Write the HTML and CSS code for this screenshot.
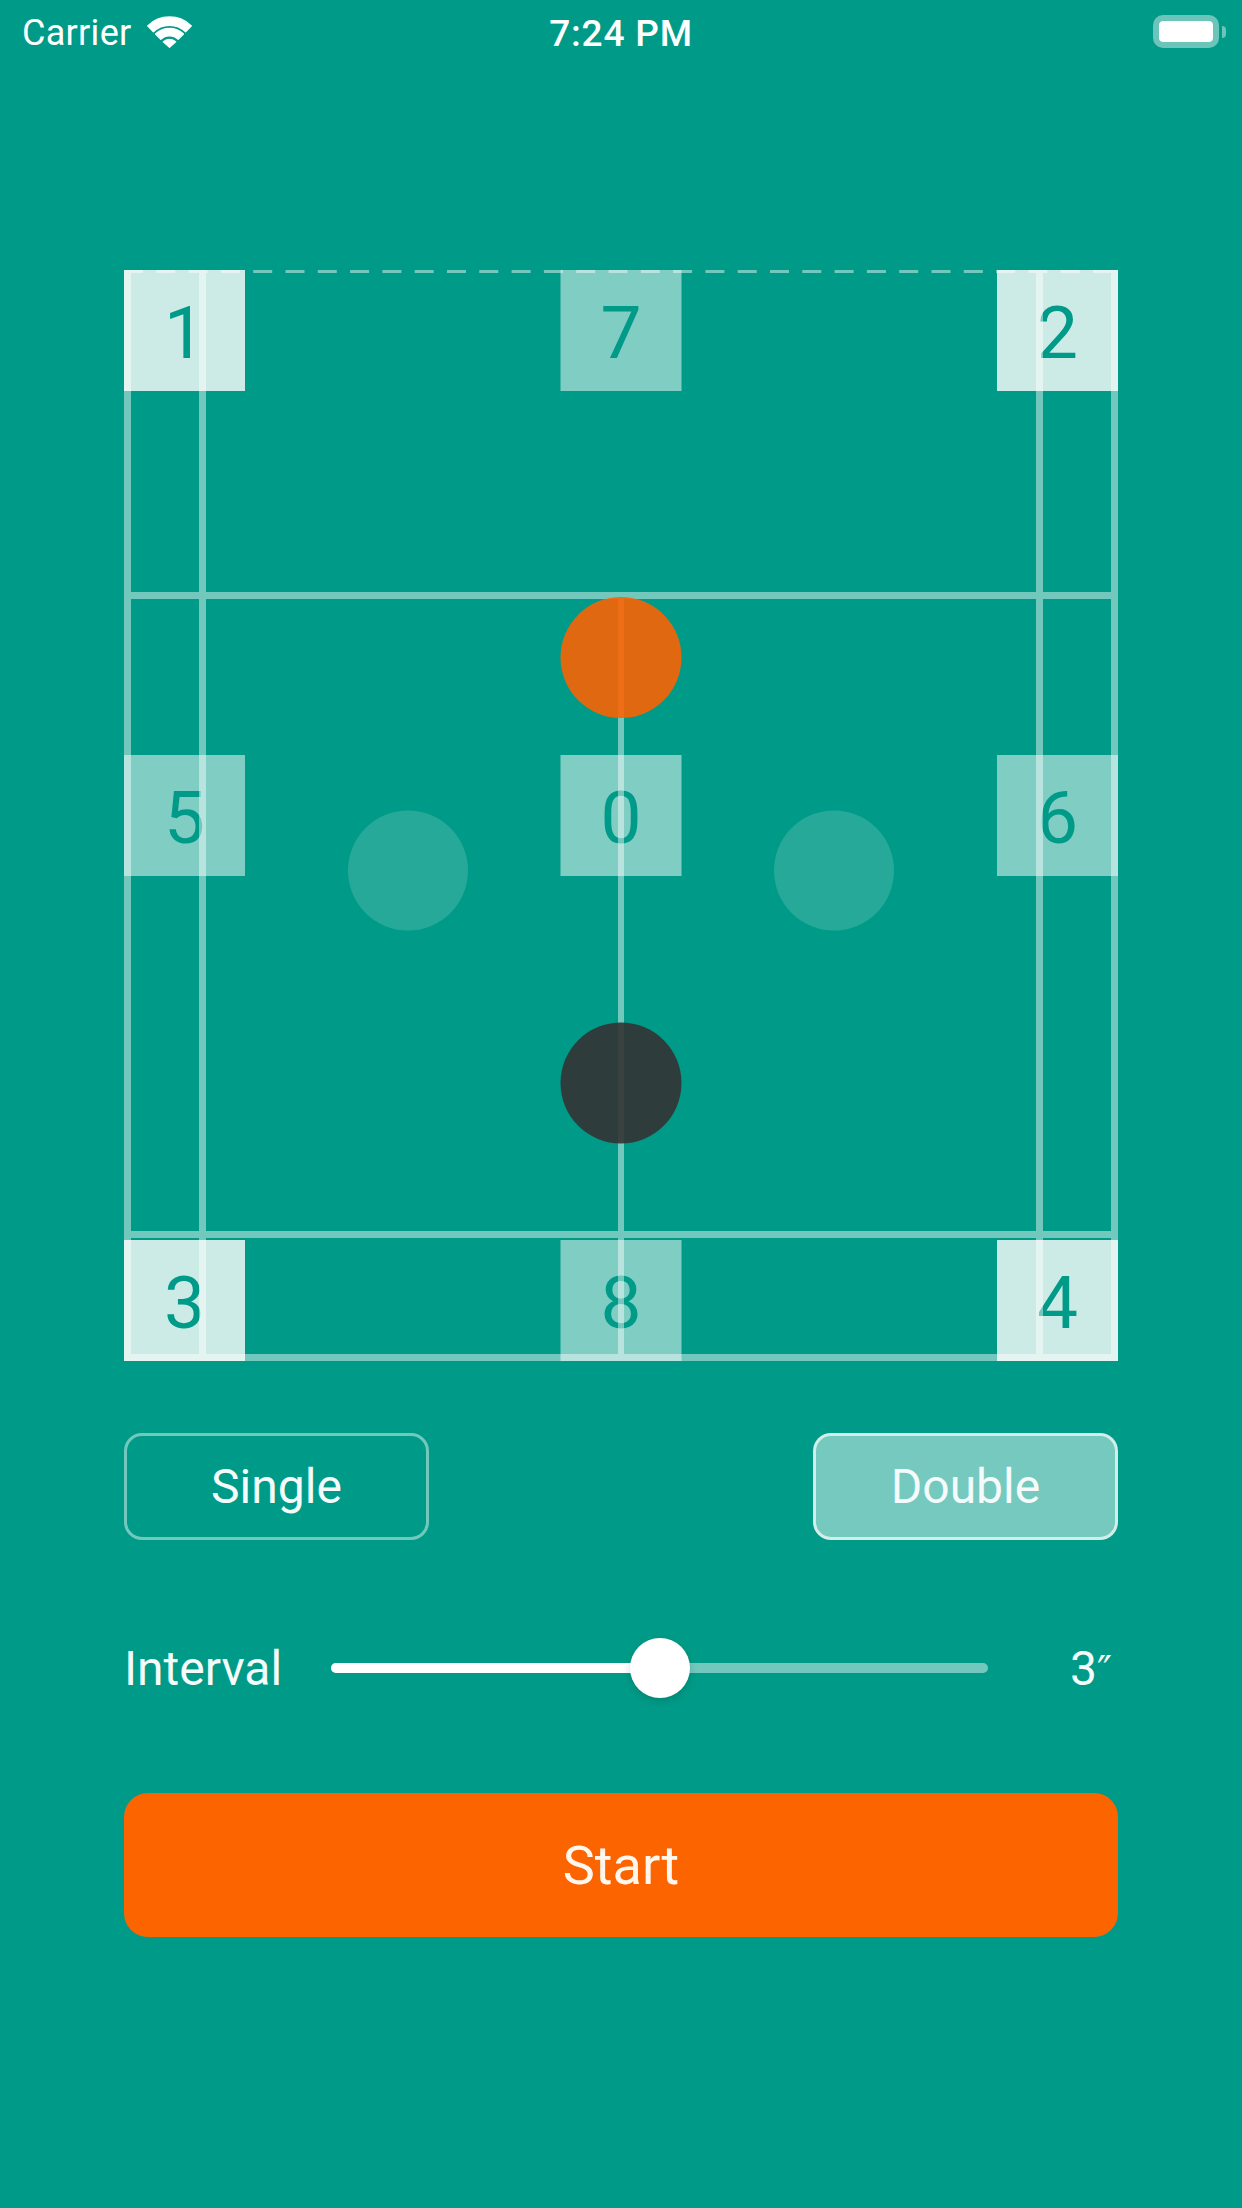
FILE: index.html
```html
<!DOCTYPE html>
<html lang="en">
<head>
<meta charset="utf-8">
<title>Badminton Trainer</title>
<link rel="stylesheet" href="styles.css">
</head>
<body>
<div class="status">
  <div class="status-left">
    <span class="carrier">Carrier</span>
    <svg class="wifi" width="45" height="32" viewBox="0 0 45 32">
      <g fill="#fff" stroke="#fff" stroke-width="1.2" stroke-linejoin="round">
        <path d="M0.6 9.9 A31.2 31.2 0 0 1 44.4 9.9 L38.6 15.9 A23 23 0 0 0 6.4 15.9 Z"/>
        <path d="M8.5 18 A20 20 0 0 1 36.5 18 L31.2 23.3 A12.5 12.5 0 0 0 13.8 23.3 Z"/>
        <path d="M16.3 25.8 A9 9 0 0 1 28.7 25.8 L22.5 31.4 Z"/>
      </g>
    </svg>
  </div>
  <div class="time">7:24 PM</div>
  <div class="status-right">
    <div class="battery"><div class="battery-fill"></div></div>
    <div class="battery-nub"></div>
  </div>
</div>

<main class="content">
  <svg class="court" width="994" height="1091" viewBox="0 0 994 1091">
    <g class="tiles">
      <rect class="tile-light" x="0" y="0" width="121" height="121"/>
      <rect class="tile-mid" x="436.5" y="0" width="121" height="121"/>
      <rect class="tile-light" x="873" y="0" width="121" height="121"/>
      <rect class="tile-mid" x="0" y="485" width="121" height="121"/>
      <rect class="tile-mid" x="436.5" y="485" width="121" height="121"/>
      <rect class="tile-mid" x="873" y="485" width="121" height="121"/>
      <rect class="tile-light" x="0" y="970" width="121" height="121"/>
      <rect class="tile-mid" x="436.5" y="970" width="121" height="121"/>
      <rect class="tile-light" x="873" y="970" width="121" height="121"/>
    </g>
    <g class="digits">
      <text x="60.5" y="88">1</text>
      <text x="497" y="88">7</text>
      <text x="933.5" y="88">2</text>
      <text x="60.5" y="573">5</text>
      <text x="497" y="573">0</text>
      <text x="933.5" y="573">6</text>
      <text x="60.5" y="1058">3</text>
      <text x="497" y="1058">8</text>
      <text x="933.5" y="1058">4</text>
    </g>
    <g class="lines">
      <rect x="0" y="0" width="7" height="1091"/>
      <rect x="75" y="0" width="7" height="1091"/>
      <rect x="912" y="0" width="7" height="1091"/>
      <rect x="987" y="0" width="7" height="1091"/>
      <rect x="0" y="322" width="994" height="7"/>
      <rect x="0" y="961" width="994" height="7"/>
      <rect x="0" y="1084" width="994" height="7"/>
      <rect x="494" y="322" width="6" height="769"/>
      <line class="dash" x1="0" y1="1.5" x2="994" y2="1.5"/>
    </g>
    <circle class="ghost" cx="284" cy="600.5" r="60"/>
    <circle class="ghost" cx="710" cy="600.5" r="60"/>
    <circle class="player-orange" cx="497" cy="387.5" r="60.5"/>
    <circle class="player-dark" cx="497" cy="813" r="60.5"/>
  </svg>

  <div class="modes">
    <button class="mode">Single</button>
    <button class="mode mode-active">Double</button>
  </div>

  <div class="interval">
    <span class="interval-label">Interval</span>
    <div class="slider">
      <div class="slider-fill" style="width:329px"></div>
      <div class="slider-thumb" style="left:329px"></div>
    </div>
    <span class="interval-value">3<span class="prime">″</span></span>
  </div>

  <button class="start">Start</button>
</main>
</body>
</html>
```

FILE: styles.css
```css
html, body {
  margin: 0;
  padding: 0;
}

body {
  width: 1242px;
  height: 2208px;
  background: #009b88;
  font-family: "Roboto", "Liberation Sans", "DejaVu Sans", sans-serif;
  color: #f4fbfa;
  overflow: hidden;
}

/* ---------- status bar ---------- */
.status {
  height: 60px;
  padding-top: 3px;
  display: grid;
  grid-template-columns: 1fr auto 1fr;
  align-items: center;
}

.status-left {
  display: flex;
  align-items: center;
  padding-left: 22px;
}

.carrier {
  font-size: 36px;
  color: #ffffff;
  letter-spacing: 0.3px;
}

.wifi {
  display: block;
  margin-left: 15px;
  margin-top: -3px;
}

.time {
  font-size: 37px;
  font-weight: 500;
  color: #ffffff;
  letter-spacing: 0.8px;
}

.status-right {
  display: flex;
  align-items: center;
  justify-content: flex-end;
  padding-right: 16px;
  margin-top: -3px;
}

.battery {
  width: 66px;
  height: 33px;
  box-sizing: border-box;
  border: 6px solid rgba(255, 255, 255, 0.42);
  border-radius: 10px;
}

.battery-fill {
  width: 100%;
  height: 100%;
  background: #ffffff;
  border-radius: 4px;
}

.battery-nub {
  width: 4px;
  height: 12px;
  margin-left: 3px;
  background: rgba(255, 255, 255, 0.42);
  border-radius: 0 4px 4px 0;
}

/* ---------- content ---------- */
.content {
  width: 994px;
  margin-left: 124px;
  display: flex;
  flex-direction: column;
}

.court {
  display: block;
  margin-top: 207px;
}

.tile-light {
  fill: #ffffff;
  fill-opacity: 0.8;
}

.tile-mid {
  fill: #ffffff;
  fill-opacity: 0.5;
}

.digits text {
  font-family: "Roboto", "Liberation Sans", sans-serif;
  font-size: 73px;
  font-weight: 400;
  fill: #009b88;
  text-anchor: middle;
}

.lines {
  fill: #ffffff;
  opacity: 0.45;
}

.dash {
  stroke: #ffffff;
  stroke-width: 3;
  stroke-dasharray: 19 13.3;
}

.ghost {
  fill: #ffffff;
  fill-opacity: 0.15;
}

.player-orange {
  fill: rgb(255, 97, 0);
  fill-opacity: 0.88;
}

.player-dark {
  fill: #333333;
  fill-opacity: 0.9;
}

/* ---------- mode buttons ---------- */
.modes {
  margin-top: 72px;
  display: flex;
  justify-content: space-between;
}

.mode {
  width: 305px;
  height: 107px;
  padding: 0;
  box-sizing: border-box;
  border: 3px solid rgba(255, 255, 255, 0.45);
  border-radius: 18px;
  background: transparent;
  color: #f4fbfa;
  font-family: inherit;
  font-size: 48px;
}

.mode-active {
  background: rgba(255, 255, 255, 0.46);
  border-color: rgba(255, 255, 255, 0.68);
}

/* ---------- interval slider ---------- */
.interval {
  margin-top: 98px;
  height: 60px;
  display: flex;
  align-items: center;
}

.interval-label {
  width: 207px;
  font-size: 48px;
}

.slider {
  position: relative;
  width: 657px;
  height: 10px;
  border-radius: 5px;
  background: rgba(255, 255, 255, 0.45);
}

.slider-fill {
  position: absolute;
  left: 0;
  top: 0;
  bottom: 0;
  background: #ffffff;
  border-radius: 5px;
}

.slider-thumb {
  position: absolute;
  top: 50%;
  width: 60px;
  height: 60px;
  border-radius: 50%;
  background: #ffffff;
  transform: translate(-50%, -50%);
  box-shadow: 0 3px 8px rgba(0, 0, 0, 0.15);
}

.interval-value {
  flex: 1;
  text-align: right;
  padding-right: 6px;
  font-size: 48px;
}

.prime {
  font-family: "DejaVu Sans", sans-serif;
  font-size: 40px;
}

/* ---------- start ---------- */
.start {
  margin-top: 95px;
  width: 994px;
  height: 144px;
  padding: 0;
  border: none;
  border-radius: 24px;
  background: #fc6400;
  color: #fff6ee;
  font-family: inherit;
  font-size: 54px;
}
```
